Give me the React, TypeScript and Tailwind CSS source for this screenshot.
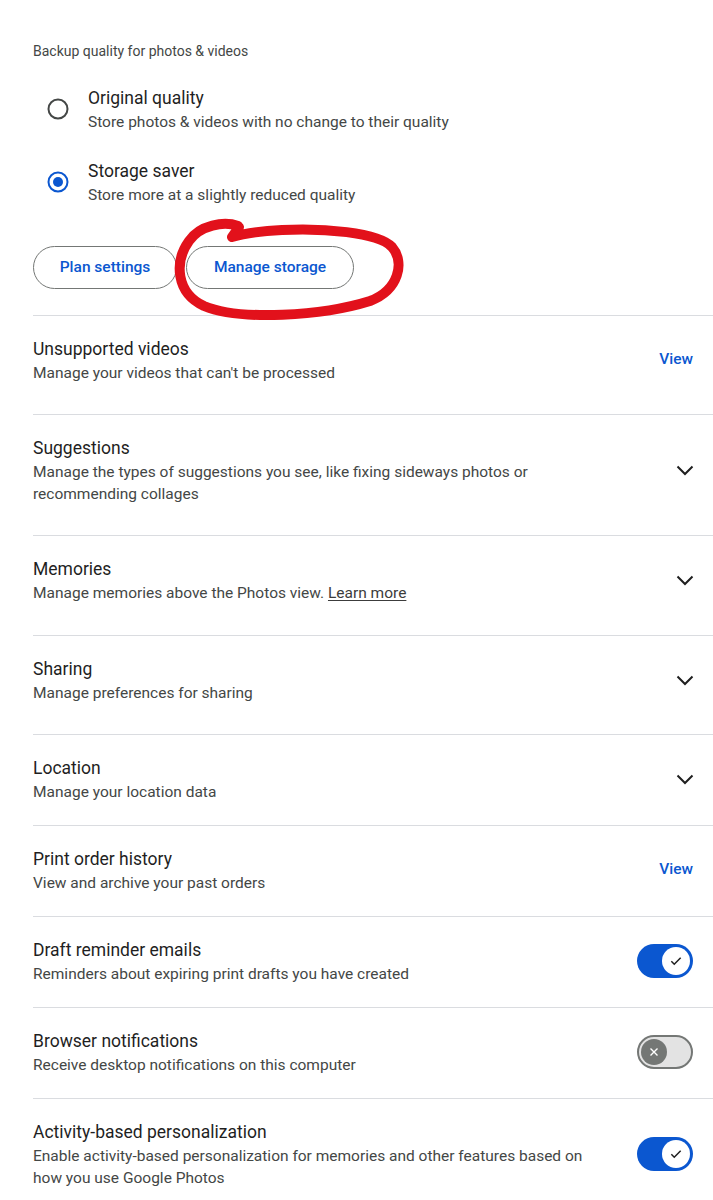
import { FC, ReactNode } from "react";

type Setting = {
  title: string;
  body: ReactNode;
  action: "view" | "chevron" | "on" | "off";
  extra?: number;
};

const settings: Setting[] = [
  {
    title: "Unsupported videos",
    body: "Manage your videos that can't be processed",
    action: "view",
    extra: 8,
  },
  {
    title: "Suggestions",
    body: (
      <>
        Manage the types of suggestions you see, like fixing sideways photos or
        <br />
        recommending collages
      </>
    ),
    action: "chevron",
    extra: 8,
  },
  {
    title: "Memories",
    body: (
      <>
        Manage memories above the Photos view.{" "}
        <span className="underline underline-offset-2 text-[#3c3c3c]">Learn more</span>
      </>
    ),
    action: "chevron",
    extra: 9,
  },
  {
    title: "Sharing",
    body: "Manage preferences for sharing",
    action: "chevron",
    extra: 8,
  },
  { title: "Location", body: "Manage your location data", action: "chevron" },
  { title: "Print order history", body: "View and archive your past orders", action: "view" },
  {
    title: "Draft reminder emails",
    body: "Reminders about expiring print drafts you have created",
    action: "on",
  },
  {
    title: "Browser notifications",
    body: "Receive desktop notifications on this computer",
    action: "off",
  },
  {
    title: "Activity-based personalization",
    body: (
      <>
        Enable activity-based personalization for memories and other features based on
        <br />
        how you use Google Photos
      </>
    ),
    action: "on",
  },
];

const Chevron = () => (
  <svg width="18" height="11" viewBox="0 0 18 11" className="mr-[-1px]">
    <polyline points="1.5,1.5 9,9 16.5,1.5" fill="none" stroke="#1f1f1f" strokeWidth="2" />
  </svg>
);

const Toggle: FC<{ on: boolean }> = ({ on }) =>
  on ? (
    <div className="w-[56px] h-[34px] rounded-full bg-[#0b57d0] flex items-center justify-end pr-[3px]">
      <div className="w-[28px] h-[28px] rounded-full bg-white flex items-center justify-center">
        <svg width="14" height="14" viewBox="0 0 24 24">
          <path d="M4 12.5l5 5L20 6.5" fill="none" stroke="#1f1f1f" strokeWidth="2.6" />
        </svg>
      </div>
    </div>
  ) : (
    <div className="w-[56px] h-[34px] rounded-full bg-[#e3e3e3] border-2 border-[#747775] flex items-center pl-[2px]">
      <div className="w-[26px] h-[26px] rounded-full bg-[#747775] flex items-center justify-center">
        <svg width="14" height="14" viewBox="0 0 24 24">
          <path d="M6 6l12 12M18 6L6 18" stroke="#ffffff" strokeWidth="2.4" />
        </svg>
      </div>
    </div>
  );

const Radio: FC<{ checked: boolean }> = ({ checked }) => (
  <svg width="22" height="22" viewBox="0 0 22 22">
    <circle cx="11" cy="11" r="9.5" fill="none" stroke={checked ? "#0b57d0" : "#444746"} strokeWidth="2" />
    {checked && <circle cx="11" cy="11" r="5" fill="#0b57d0" />}
  </svg>
);

const extraPad: Record<number, string> = { 8: "pb-[8px]", 9: "pb-[9px]" };

const App: FC = () => {
  return (
    <div
      className="relative min-h-[1200px] bg-white pl-[33px] pt-[41px]"
      style={{ fontFamily: "Roboto, 'Noto Sans', sans-serif" }}
    >
      <p className="text-[14px] leading-[20px] text-[#444746]">Backup quality for photos &amp; videos</p>

      <div className="flex flex-col gap-[25px] mt-[24px] pl-[14px]">
        {[
          { t: "Original quality", s: "Store photos & videos with no change to their quality", c: false },
          { t: "Storage saver", s: "Store more at a slightly reduced quality", c: true },
        ].map((o) => (
          <div key={o.t} className="flex items-center gap-[19px]">
            <Radio checked={o.c} />
            <div>
              <div className="text-[17.5px] leading-[26px] text-[#1f1f1f]">{o.t}</div>
              <div className="text-[15.5px] leading-[22px] text-[#444746]">{o.s}</div>
            </div>
          </div>
        ))}
      </div>

      <div className="flex gap-[9px] mt-[40px] mb-[26px]">
        <button className="h-[43px] w-[144px] rounded-full border border-[#747775] text-[15.5px] font-medium text-[#0b57d0]">
          Plan settings
        </button>
        <button className="h-[43px] w-[168px] rounded-full border border-[#747775] text-[15.5px] font-medium text-[#0b57d0]">
          Manage storage
        </button>
      </div>

      {settings.map((s) => (
        <div key={s.title} className={`border-t border-[#dadce0] ${s.extra ? extraPad[s.extra] : ""}`}>
          <div className="flex items-center justify-between pt-[20px] pb-[22px] pr-[20px]">
            <div>
              <div className="text-[17.5px] leading-[26px] text-[#1f1f1f]">{s.title}</div>
              <div className="text-[15.5px] leading-[22px] text-[#444746]">{s.body}</div>
            </div>
            {s.action === "view" && (
              <span className="text-[15.5px] font-medium text-[#0b57d0]">View</span>
            )}
            {s.action === "chevron" && <Chevron />}
            {s.action === "on" && <Toggle on />}
            {s.action === "off" && <Toggle on={false} />}
          </div>
        </div>
      ))}

      {/* hand-drawn highlight around Manage storage */}
      <svg className="absolute left-0 top-0 pointer-events-none" width="713" height="400">
        <path
          d="M238 226 C 224 221, 200 225, 189 241 C 174 262, 176 293, 204 306 C 240 321, 322 316, 370 301 C 399 290, 405 262, 392 247 C 378 232, 322 228, 282 230 C 260 231, 242 234, 232 237 L 239 227"
          fill="none"
          stroke="#e2111b"
          strokeWidth="10"
          strokeLinecap="round"
          strokeLinejoin="round"
        />
      </svg>
    </div>
  );
};

export default App;
